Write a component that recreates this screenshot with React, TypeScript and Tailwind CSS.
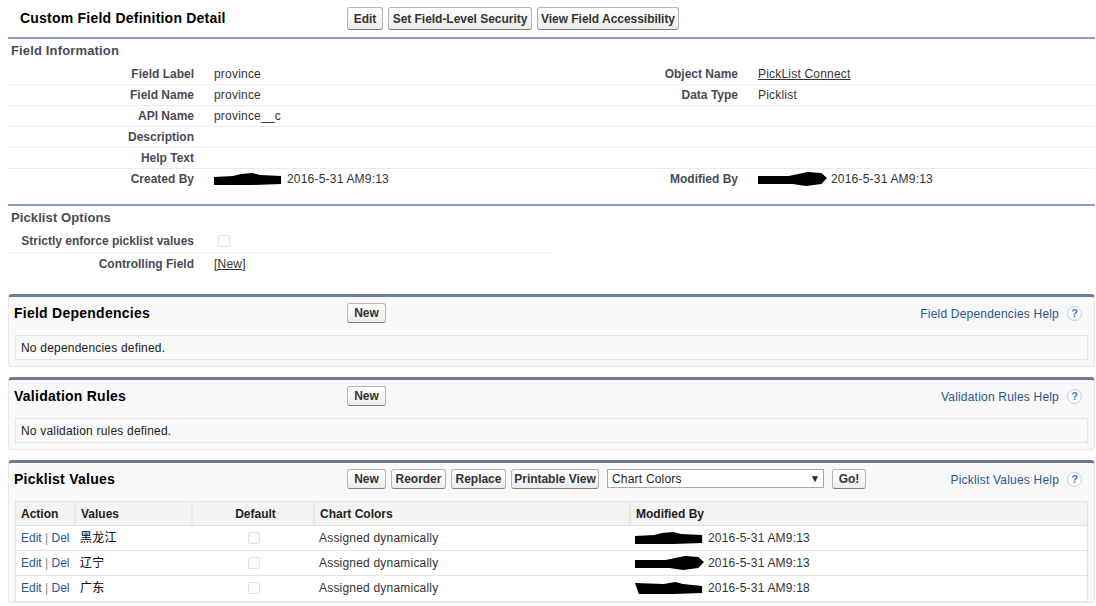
const Btn = ({ label, className = "" }: { label: string; className?: string }) => (
    <button className={`h-[20px] shrink-0 rounded-[3px] border border-[#b5b5b5] border-b-[#7f7f7f] bg-gradient-to-b from-white to-[#ececec] text-[12px] font-bold leading-none tracking-[-0.03px] text-[#333] ${className}`}>
        {label}
    </button>
)

const Scribble = ({ width, kind = 0 }: { width: number; kind?: number }) => {
    const paths = [
        "M0 5 L20 4 L28 2 L40 1 L48 3 L70 4 L70 12 L40 13 L0 13 Z",
        "M0 4 L32 4 L42 2 L52 0 L66 1 L72 6 L66 12 L50 14 L36 12 L0 12 Z",
        "M0 2 L30 3 L42 1 L50 3 L70 5 L70 12 L40 13 L4 13 Z",
    ]
    return (
        <svg width={width} height="14" viewBox="0 0 72 14" preserveAspectRatio="none" className="mr-1 inline-block shrink-0 align-middle">
            <path d={paths[kind]} fill="#000" />
        </svg>
    )
}

const CheckBox = () => <span className="inline-block h-[12px] w-[12px] rounded-[2px] border border-[#e2e2e2] bg-[#fcfcfc]" />

const Row = ({ label, value, rightLabel, rightValue, last }: { label: string; value?: React.ReactNode; rightLabel?: string; rightValue?: React.ReactNode; last?: boolean }) => (
    <div className={`flex items-center ${last ? "h-[20px]" : "h-[21px] border-b border-[#ececec]"}`}>
        <div className="w-[186px] text-right font-bold tracking-normal text-[#4a4a56]">{label}</div>
        <div className="flex w-[364px] items-center pl-5">{value}</div>
        <div className="w-[180px] text-right font-bold tracking-normal text-[#4a4a56]">{rightLabel}</div>
        <div className="flex flex-1 items-center pl-5">{rightValue}</div>
    </div>
)

const HelpLink = ({ label }: { label: string }) => (
    <div className="ml-auto flex items-center pr-[6px] text-[12px] text-[#27598f]">
        <span>{label}</span>
        <span className="ml-[8px] flex h-[15px] w-[15px] items-center justify-center rounded-full border border-[#b9cfe4] bg-white text-[11px] font-bold tracking-normal text-[#3d7ab8]">?</span>
    </div>
)

const Block = ({ title, help, children, actions, className = "" }: { title: string; help: string; children: React.ReactNode; actions: React.ReactNode; className?: string }) => (
    <div className={`rounded-[4px] border border-t-[3px] border-[#e8e8e8] border-t-[#6f7c8f] bg-[#f8f8f8] px-[6px] ${className}`}>
        <div className="flex h-[38px] items-center pb-[5px]">
            <div className="-ml-px w-[333px] shrink-0 text-[14px] font-bold tracking-[0.25px] text-black">{title}</div>
            <div className="mb-[2px]">{actions}</div>
            <HelpLink label={help} />
        </div>
        {children}
    </div>
)

const EmptyNote = ({ text }: { text: string }) => (
    <div className="flex h-[25px] items-center border border-[#e4e4e4] bg-[#f8f8f8] pl-[5px] text-[12px] text-[#222]">{text}</div>
)

const picklist = [
    { value: "黑龙江", time: "2016-5-31 AM9:13", kind: 0 },
    { value: "辽宁", time: "2016-5-31 AM9:13", kind: 1 },
    { value: "广东", time: "2016-5-31 AM9:18", kind: 2 },
]

const colClass = "grid grid-cols-[60px_117px_122px_316px_1fr]"

export default function App() {
    return (
        <div className="h-[606px] w-[1096px] overflow-hidden bg-white pl-2 pr-px font-['Liberation_Sans','Noto_Sans_CJK_SC',sans-serif] text-[12px] tracking-[0.2px] text-[#333]">
            <div className="flex h-[39px] items-center border-b-2 border-[#8e9dbb]">
                <div className="w-[339px] pl-3 text-[14px] font-bold tracking-[0.22px] text-black">Custom Field Definition Detail</div>
                <div className="flex gap-[5px]">
                    <Btn label="Edit" className="!h-[23px] w-[36px]" />
                    <Btn label="Set Field-Level Security" className="!h-[23px] w-[144px]" />
                    <Btn label="View Field Accessibility" className="!h-[23px] w-[142px]" />
                </div>
            </div>

            <div className="flex h-[25px] items-center pb-[2px] pl-[3px] text-[13px] font-bold tracking-[0.15px] text-[#4a4a56]">Field Information</div>
            <Row label="Field Label" value="province" rightLabel="Object Name" rightValue={<a className="underline">PickList Connect</a>} />
            <Row label="Field Name" value="province" rightLabel="Data Type" rightValue="Picklist" />
            <Row label="API Name" value="province__c" />
            <Row label="Description" />
            <Row label="Help Text" />
            <Row last label="Created By" value={<><Scribble width={69} />2016-5-31 AM9:13</>} rightLabel="Modified By" rightValue={<><Scribble width={69} kind={1} />2016-5-31 AM9:13</>} />

            <div className="mt-[15px] flex h-[26px] items-center border-t-2 border-[#8e9dbb] pl-[3px] text-[13px] font-bold tracking-[0.1px] text-[#4a4a56]">Picklist Options</div>
            <div className="w-[544px]">
                <div className="flex h-[23px] items-center border-b border-[#ececec]">
                    <div className="w-[186px] text-right font-bold tracking-normal text-[#4a4a56]">Strictly enforce picklist values</div>
                    <div className="flex items-center pl-6"><CheckBox /></div>
                </div>
                <div className="flex h-[22px] items-center">
                    <div className="w-[186px] text-right font-bold tracking-normal text-[#4a4a56]">Controlling Field</div>
                    <div className="pl-5"><a className="underline">[New]</a></div>
                </div>
            </div>

            <Block className="mt-[19px] h-[73px]" title="Field Dependencies" help="Field Dependencies Help" actions={<Btn label="New" className="w-[39px]" />}>
                <EmptyNote text="No dependencies defined." />
            </Block>

            <Block className="mt-[10px] h-[73px]" title="Validation Rules" help="Validation Rules Help" actions={<Btn label="New" className="w-[39px]" />}>
                <EmptyNote text="No validation rules defined." />
            </Block>

            <Block
                className="mt-[10px]"
                title="Picklist Values"
                help="Picklist Values Help"
                actions={
                    <div className="flex items-center gap-[5px]">
                        <Btn label="New" className="w-[39px]" />
                        <Btn label="Reorder" className="w-[55px]" />
                        <Btn label="Replace" className="w-[55px]" />
                        <Btn label="Printable View" className="w-[88px]" />
                        <div className="ml-[3px] flex h-[19px] w-[217px] items-center justify-between border border-[#a9a9a9] bg-white pl-[4px] pr-[3px] text-[12px] text-[#222]">
                            <span>Chart Colors</span>
                            <span className="text-[10px]">▼</span>
                        </div>
                        <Btn label="Go!" className="ml-[3px] w-[34px]" />
                    </div>
                }
            >
                <div className="border border-[#e0e3e5] bg-white">
                    <div className={`${colClass} h-[24px] items-center border-b border-[#e0e3e5] bg-[#f2f3f3] font-bold tracking-normal text-[#222]`}>
                        <div className="flex h-full items-center border-r-2 border-[#e8e8e8] pl-[5px]">Action</div>
                        <div className="flex h-full items-center border-r-2 border-[#e8e8e8] pl-[5px]">Values</div>
                        <div className="flex h-full items-center justify-center border-r-2 border-[#e8e8e8] pl-[5px]">Default</div>
                        <div className="flex h-full items-center border-r-2 border-[#e8e8e8] pl-[5px]">Chart Colors</div>
                        <div className="flex h-full items-center pl-[5px]">Modified By</div>
                    </div>
                    {picklist.map((item) => (
                        <div key={item.value} className={`${colClass} h-[25px] items-center border-b border-[#e3e3e3] last:border-b-0 last:pb-[2px]`}>
                            <div className="pl-[5px] tracking-normal text-[#27598f]">Edit <span className="text-[#888]">|</span> Del</div>
                            <div className="pl-[4px] text-black">{item.value}</div>
                            <div className="flex justify-center"><CheckBox /></div>
                            <div className="pl-[4px]">Assigned dynamically</div>
                            <div className="flex items-center pl-[4px]"><Scribble width={69} kind={item.kind} />{item.time}</div>
                        </div>
                    ))}
                </div>
            </Block>
        </div>
    )
}
